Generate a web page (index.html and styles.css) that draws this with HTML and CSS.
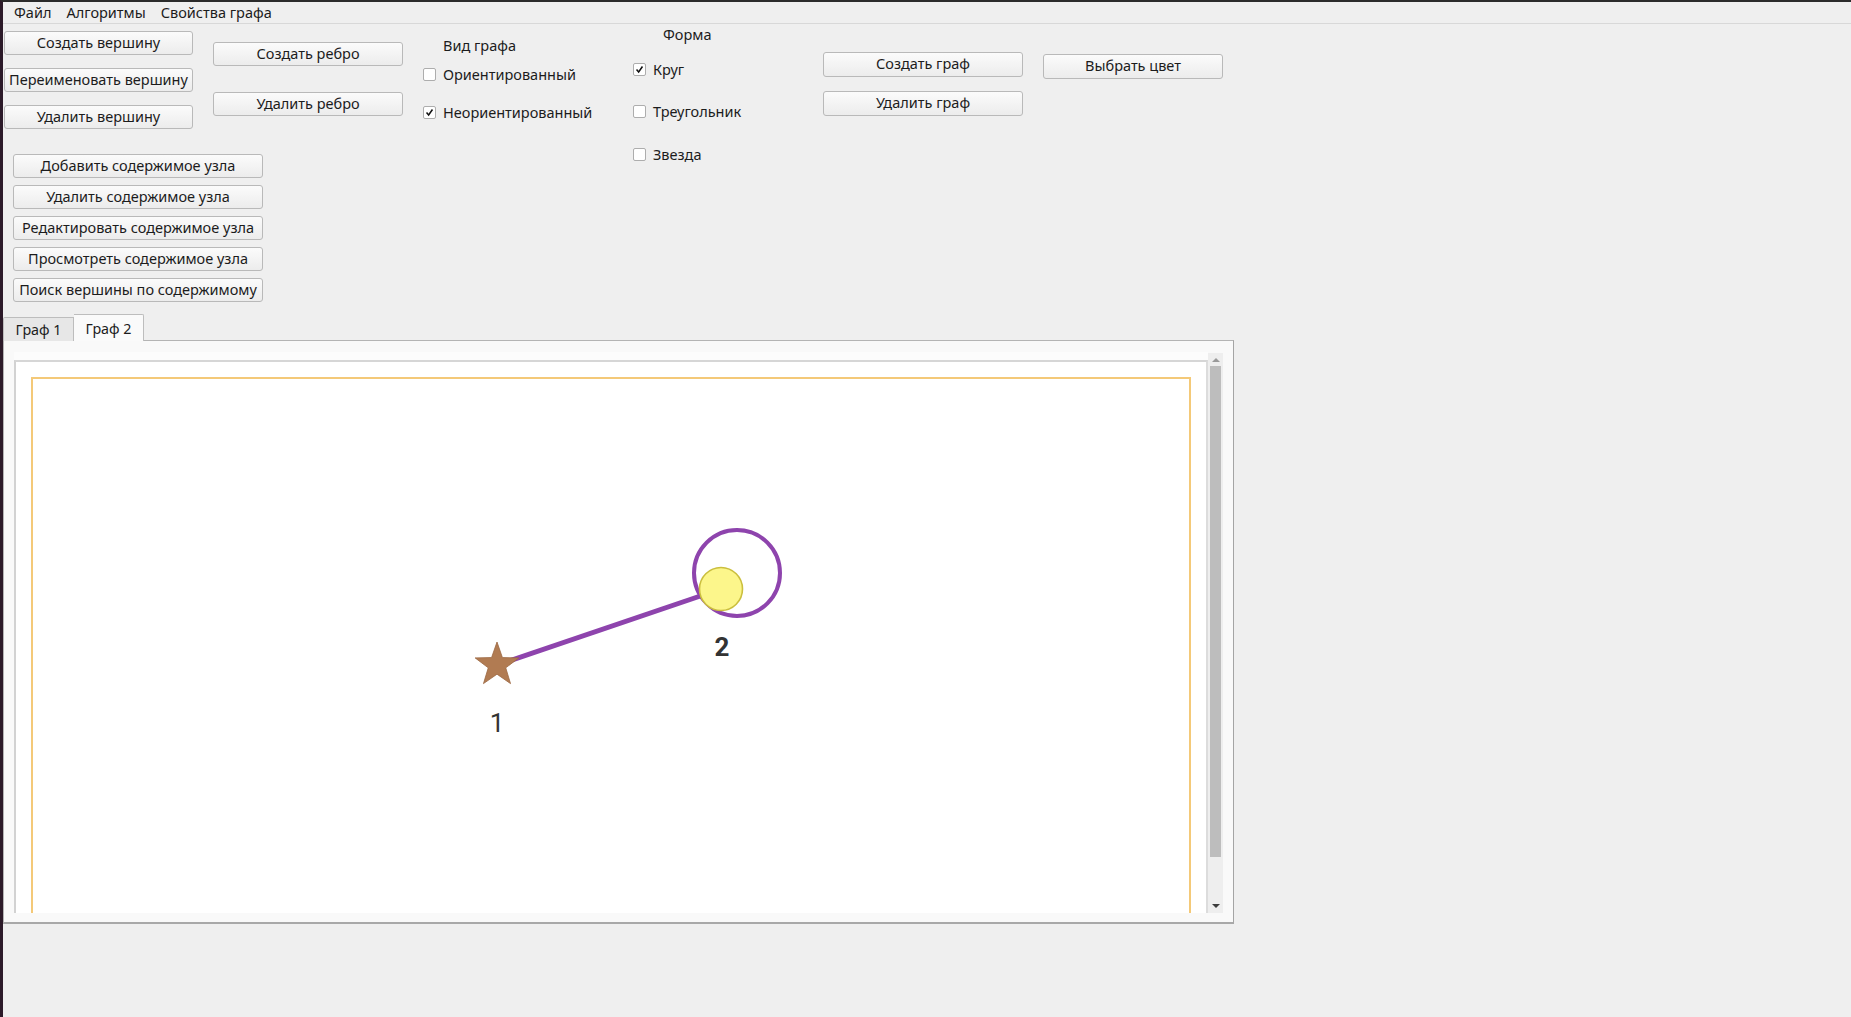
FILE: index.html
```html
<!DOCTYPE html>
<html lang="ru">
<head>
<meta charset="utf-8">
<title>Граф</title>
<link rel="stylesheet" href="styles.css">
</head>
<body>
<div class="window">
  <div class="menubar">
    <span class="menu-item">Файл</span>
    <span class="menu-item">Алгоритмы</span>
    <span class="menu-item">Свойства графа</span>
  </div>

  <div class="top">
    <div class="col col-vertex">
      <button class="btn">Создать вершину</button>
      <button class="btn">Переименовать вершину</button>
      <button class="btn">Удалить вершину</button>
    </div>
    <div class="col col-edge">
      <button class="btn">Создать ребро</button>
      <button class="btn">Удалить ребро</button>
    </div>
    <div class="col col-kind">
      <div class="group-title">Вид графа</div>
      <label class="check"><span class="box"></span>Ориентированный</label>
      <label class="check"><span class="box checked"><svg viewBox="0 0 13 13"><polyline points="3,6.5 5.5,9.5 10,3" /></svg></span>Неориентированный</label>
    </div>
    <div class="col col-shape">
      <div class="group-title">Форма</div>
      <label class="check"><span class="box checked"><svg viewBox="0 0 13 13"><polyline points="3,6.5 5.5,9.5 10,3" /></svg></span>Круг</label>
      <label class="check"><span class="box"></span>Треугольник</label>
      <label class="check"><span class="box"></span>Звезда</label>
    </div>
    <div class="col col-graph">
      <button class="btn">Создать граф</button>
      <button class="btn">Удалить граф</button>
    </div>
    <div class="col col-color">
      <button class="btn">Выбрать цвет</button>
    </div>
  </div>

  <div class="node-btns">
    <button class="btn">Добавить содержимое узла</button>
    <button class="btn">Удалить содержимое узла</button>
    <button class="btn">Редактировать содержимое узла</button>
    <button class="btn">Просмотреть содержимое узла</button>
    <button class="btn">Поиск вершины по содержимому</button>
  </div>

  <div class="tabs">
    <div class="tabbar">
      <div class="tab">Граф 1</div>
      <div class="tab active">Граф 2</div>
    </div>
    <div class="pane">
      <div class="viewwrap">
        <div class="viewarea">
          <div class="view">
            <svg class="scene" width="1190" height="551" viewBox="0 0 1190 551">
              <rect x="16" y="16" width="1158" height="1000" fill="none" stroke="#f4c978" stroke-width="2"/>
              <line x1="481" y1="303" x2="705" y2="227" stroke="#8e44ad" stroke-width="5"/>
              <circle cx="721" cy="211" r="43" fill="none" stroke="#8e44ad" stroke-width="4"/>
              <circle cx="705" cy="227" r="21.5" fill="#fcf68b" stroke="#cbbf3e" stroke-width="1.6"/>
              <polygon points="481,280 486.41,295.56 502.87,295.89 489.75,305.84 494.52,321.61 481,312.2 467.48,321.61 472.25,305.84 459.13,295.89 475.59,295.56" fill="#b17b52" stroke="#9c6842" stroke-width="0.8"/>
              <text x="706" y="294" class="lbl lbl-bold" text-anchor="middle">2</text>
              <text x="481" y="370" class="lbl" text-anchor="middle">1</text>
            </svg>
          </div>
        </div>
        <div class="scrollbar">
          <div class="arrow up"></div>
          <div class="thumb"></div>
          <div class="arrow down"></div>
        </div>
      </div>
    </div>
  </div>
</div>
</body>
</html>
```

FILE: styles.css
```css
html, body {
  margin: 0;
  padding: 0;
}
body {
  background: #efefef;
}
.window {
  width: 1851px;
  height: 1017px;
  box-sizing: border-box;
  border-top: 2px solid #2b2b2b;
  border-left: 3px solid #2c1a29;
  background: #efefef;
  font-family: "Noto Sans", "Open Sans", sans-serif;
  font-size: 14.5px;
  color: #1c1c1c;
  overflow: hidden;
}

/* menu */
.menubar {
  box-sizing: border-box;
  height: 22px;
  padding-bottom: 2px;
  border-bottom: 1px solid #d8d8d8;
  display: flex;
  align-items: center;
  padding-left: 11px;
  font-size: 14.5px;
}
.menu-item {
  margin-right: 15px;
}

/* buttons */
.btn {
  display: block;
  box-sizing: border-box;
  height: 24px;
  padding: 0 0 2px 0;
  border: 1px solid #b9b9b9;
  border-radius: 3px;
  background: linear-gradient(#fbfbfb, #ececec);
  font-family: inherit;
  font-size: 14.5px;
  color: #1c1c1c;
  text-align: center;
  line-height: 19px;
  white-space: nowrap;
}

/* top area */
.top {
  display: flex;
  height: 120px;
  align-items: flex-start;
}
.col {
  display: flex;
  flex-direction: column;
  box-sizing: border-box;
}
.col-vertex {
  width: 189px;
  margin-left: 1px;
  padding-top: 7px;
  gap: 13px;
}
.col-vertex .btn { width: 189px; }
.col-edge {
  width: 190px;
  margin-left: 20px;
  padding-top: 18px;
  gap: 26px;
}
.col-edge .btn { width: 190px; }
.col-kind {
  width: 190px;
  margin-left: 20px;
  padding-top: 11px;
}
.col-kind .group-title {
  padding-left: 20px;
  height: 20px;
  line-height: 20px;
  margin-bottom: 9px;
}
.col-kind .check + .check { margin-top: 18px; }
.col-shape {
  width: 170px;
  margin-left: 20px;
  padding-top: 0;
}
.col-shape .group-title {
  padding-left: 30px;
  height: 20px;
  line-height: 20px;
  margin-bottom: 15px;
}
.col-shape .check + .check { margin-top: 22px; }
.col-shape .check:last-child { margin-top: 23px; }
.col-graph {
  width: 200px;
  margin-left: 20px;
  padding-top: 28px;
  gap: 14px;
}
.col-graph .btn { width: 200px; height: 25px; }
.col-color {
  width: 180px;
  margin-left: 20px;
  padding-top: 30px;
}
.col-color .btn { width: 180px; height: 25px; }

.check {
  display: flex;
  align-items: center;
  height: 20px;
  white-space: nowrap;
}
.box {
  width: 13px;
  height: 13px;
  box-sizing: border-box;
  border: 1px solid #adadad;
  border-radius: 2px;
  background: #fff;
  margin-right: 7px;
  display: flex;
}
.box svg {
  width: 11px;
  height: 11px;
}
.box polyline {
  fill: none;
  stroke: #111;
  stroke-width: 1.8;
}

/* node buttons */
.node-btns {
  display: flex;
  flex-direction: column;
  gap: 7px;
  padding-top: 10px;
  margin-left: 10px;
}
.node-btns .btn { width: 250px; }

/* tabs */
.tabs {
  margin-top: 12px;
}
.tabbar {
  display: flex;
  align-items: flex-end;
  height: 27px;
  position: relative;
  z-index: 1;
}
.tab {
  box-sizing: border-box;
  height: 24px;
  width: 71px;
  border: 1px solid #bdbdbd;
  border-bottom: none;
  border-radius: 2px 0 0 0;
  background: #e7e7e7;
  text-align: center;
  line-height: 24px;
  font-size: 14.3px;
}
.tab.active {
  height: 27px;
  width: 70px;
  background: #fafafa;
  border-left: none;
  border-radius: 0 2px 0 0;
  line-height: 27px;
}
.pane {
  box-sizing: border-box;
  width: 1231px;
  height: 584px;
  margin-top: -1px;
  border: 1px solid #b4b4b4;
  border-right-color: #a4a4a4;
  border-bottom: 2px solid #a8a8a8;
  background: #f9f9f9;
  padding: 11px 10px 10px 10px;
}
.viewwrap {
  display: flex;
  height: 561px;
}
.viewarea {
  flex: 1;
  background: #fcfcfc;
  padding-top: 8px;
}
.view {
  box-sizing: border-box;
  height: 553px;
  border-left: 2px solid #d2d2d2;
  border-top: 2px solid #d6d6d6;
  border-right: 2px solid #dcdcdc;
  background: #fff;
  overflow: hidden;
}
.scene {
  display: block;
}
.lbl {
  font-family: Roboto, "Liberation Sans", sans-serif;
  font-size: 26px;
  fill: #333;
}
.lbl-bold {
  font-weight: bold;
}

/* scrollbar */
.scrollbar {
  width: 16px;
  background: #eeeeee;
  display: flex;
  flex-direction: column;
  align-items: center;
  margin-top: 1px;
}
.arrow {
  width: 0;
  height: 0;
  border-left: 4px solid transparent;
  border-right: 4px solid transparent;
}
.arrow.up {
  margin-top: 5px;
  border-bottom: 4px solid #9a9a9a;
}
.arrow.down {
  margin-top: 47px;
  border-top: 4px solid #3c3c3c;
}
.thumb {
  width: 11px;
  height: 491px;
  margin-top: 4px;
  background: #bdbdbd;
}
```
